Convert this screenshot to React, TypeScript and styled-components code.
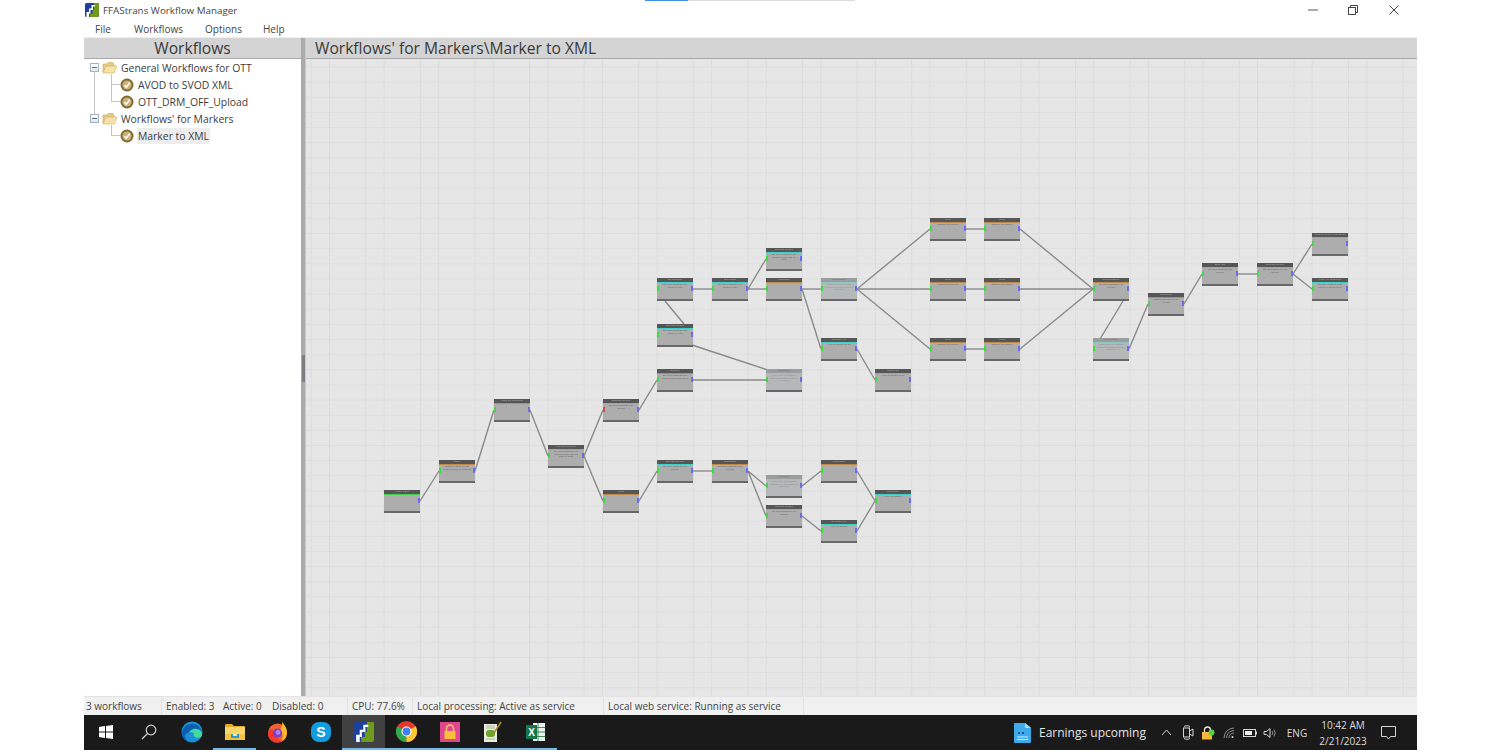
import React from 'react'
import styled, {createGlobalStyle} from 'styled-components'

const GlobalStyle = createGlobalStyle`
  html, body {
    margin: 0;
    padding: 0;
    background: #fff;
    overflow: hidden;
  }
  * {
    box-sizing: border-box;
  }
`

const FONT = `"Open Sans", "Noto Sans", sans-serif`

// the canvas starts here on the page, node coords below are page coords
const ORIGIN_X = 306
const ORIGIN_Y = 59
const NODE_W = 36
const NODE_H = 23

const accents = {
  teal: '#3fd0c8',
  orange: '#c08a4a',
  green: '#44d24e',
  pale: '#8fc4c2',
}

type Kind = keyof typeof accents

interface FlowNode {
  id: string
  x: number
  y: number
  kind: Kind
  title: string
  text: string
  noIn?: boolean
  redIn?: boolean
}

const nodes: FlowNode[] = [
  {id: 'a', x: 384, y: 490, kind: 'green', title: 'Accept video', text: '', noIn: true},
  {id: 'b', x: 439, y: 460, kind: 'orange', title: 'Probe', text: 'Reads the media file and stores values in the variables'},
  {id: 'c', x: 494, y: 399, kind: 'orange', title: 'Check file properties', text: ''},
  {id: 'd', x: 548, y: 445, kind: 'teal', title: 'Populate variables', text: 'The value assigned to the variable is read from the input file name'},
  {id: 'e', x: 603, y: 399, kind: 'teal', title: 'Populate variable', text: 'The value assigned to the variable', redIn: true},
  {id: 'f', x: 603, y: 490, kind: 'orange', title: 'Check', text: ''},
  {id: 'g', x: 657, y: 369, kind: 'orange', title: 'Decision', text: 'The value assigned to the variable is read from the file'},
  {id: 'h', x: 657, y: 460, kind: 'teal', title: 'Populate variable', text: 'The value assigned to the variable'},
  {id: 'i', x: 657, y: 324, kind: 'teal', title: 'Populate variable', text: 'The value assigned to the variable is read'},
  {id: 'j', x: 657, y: 278, kind: 'teal', title: 'Set timecode', text: 'The value assigned to the variable is read'},
  {id: 'k', x: 712, y: 278, kind: 'teal', title: 'Read offset', text: 'The value assigned to the variable is read'},
  {id: 'l', x: 712, y: 460, kind: 'orange', title: 'Read offset', text: 'The value assigned to the variable'},
  {id: 'm', x: 766, y: 248, kind: 'teal', title: 'Populate variable', text: 'The value assigned to the variable is read from file name'},
  {id: 'n', x: 766, y: 278, kind: 'orange', title: 'Conditional', text: ''},
  {id: 'o', x: 766, y: 369, kind: 'pale', title: 'Synchronize', text: 'Waits for all the incoming branches to finish before the next step'},
  {id: 'p', x: 766, y: 475, kind: 'pale', title: 'Synchronize', text: 'Waits for all the incoming branches to finish before the next step'},
  {id: 'q', x: 766, y: 505, kind: 'teal', title: 'Populate variable', text: 'The value assigned to the variable'},
  {id: 'r', x: 821, y: 278, kind: 'pale', title: 'Synchronize', text: 'Waits for all the incoming branches to finish before the next step'},
  {id: 's', x: 821, y: 338, kind: 'teal', title: 'Generate XML', text: 'Write the variable to file'},
  {id: 't', x: 821, y: 460, kind: 'orange', title: 'Conditional', text: ''},
  {id: 'u', x: 821, y: 520, kind: 'teal', title: 'Generate XML', text: 'Write the variable'},
  {id: 'v', x: 875, y: 369, kind: 'teal', title: 'Output file', text: 'Write the variable to file'},
  {id: 'w', x: 875, y: 490, kind: 'teal', title: 'Output file', text: 'Write the variable'},
  {id: 'x1', x: 930, y: 218, kind: 'orange', title: 'Check', text: 'Compare the variable'},
  {id: 'x2', x: 930, y: 278, kind: 'orange', title: 'Check', text: 'Compare the variable'},
  {id: 'x3', x: 930, y: 338, kind: 'orange', title: 'Check', text: 'Compare the variable'},
  {id: 'y1', x: 984, y: 218, kind: 'orange', title: 'Check', text: 'Compare the variable'},
  {id: 'y2', x: 984, y: 278, kind: 'orange', title: 'Check', text: 'Compare the variable'},
  {id: 'y3', x: 984, y: 338, kind: 'orange', title: 'Check', text: 'Compare the variable'},
  {id: 'z', x: 1093, y: 278, kind: 'orange', title: 'Open segments', text: 'The value assigned to the variable'},
  {id: 'z2', x: 1093, y: 338, kind: 'pale', title: 'Synchronize', text: 'Waits for all the incoming branches to finish before the next step'},
  {id: 'aa', x: 1148, y: 293, kind: 'orange', title: 'Conditional', text: 'Compare the value of the variable'},
  {id: 'ab', x: 1202, y: 263, kind: 'teal', title: 'Read XML', text: 'The value assigned to the variable'},
  {id: 'ac', x: 1257, y: 263, kind: 'teal', title: 'Populate variable', text: 'The value assigned to the variable'},
  {id: 'ad', x: 1312, y: 233, kind: 'teal', title: 'Generate output information', text: ''},
  {id: 'ae', x: 1312, y: 278, kind: 'teal', title: 'Write XML output file', text: 'The value assigned to the variable is written to file'},
]

const edges: [string, string][] = [
  ['a', 'b'], ['b', 'c'], ['c', 'd'], ['d', 'e'], ['d', 'f'], ['e', 'g'], ['f', 'h'], ['h', 'l'],
  ['l', 'p'], ['l', 'q'], ['p', 't'], ['q', 'u'], ['t', 'w'], ['u', 'w'], ['g', 'o'],
  ['j', 'k'], ['k', 'm'], ['k', 'n'], ['n', 'r'], ['n', 's'], ['s', 'v'],
  ['r', 'x1'], ['r', 'x2'], ['r', 'x3'], ['x1', 'y1'], ['x2', 'y2'], ['x3', 'y3'],
  ['y1', 'z'], ['y2', 'z'], ['y3', 'z'], ['z2', 'aa'], ['aa', 'ab'], ['ab', 'ac'], ['ac', 'ad'], ['ac', 'ae'],
]

// these run from a node's edge, not from its ports
const looseLines: [number, number, number, number][] = [
  [665, 301, 684, 324],
  [692, 345, 768, 370],
  [1100, 339, 1123, 301],
]

const Page = styled.div`
  width: 1333px;
  height: 750px;
  margin-left: 84px;
  display: flex;
  flex-direction: column;
  font-family: ${FONT};
  color: #333;
  position: relative;
`

const LoadStrip = styled.div`
  position: absolute;
  top: 0;
  left: 561px;
  width: 210px;
  height: 1px;
  background: linear-gradient(90deg, #3f8fe0 0 43px, #dcdcdc 43px);
`

const TitleBar = styled.div`
  height: 20px;
  display: flex;
  align-items: center;
  padding: 0 3px 0 1px;
  font-size: 9.8px;
  color: #444;
`

const TitleText = styled.span`
  flex: 1;
  margin-left: 4px;
`

const WindowButton = styled.div`
  width: 40.5px;
  height: 20px;
  display: flex;
  align-items: center;
  justify-content: center;
`

const MenuBar = styled.div`
  height: 17px;
  display: flex;
  align-items: center;
  padding-left: 11px;
  font-size: 10px;
  color: #444;
`

const MenuItem = styled.span<{$w: number}>`
  width: ${p => p.$w}px;
`

const Main = styled.div`
  flex: 1;
  min-height: 0;
  display: flex;
  border-top: 1px solid #eee;
`

const LeftPanel = styled.div`
  width: 217px;
  display: flex;
  flex-direction: column;
`

const PanelHeader = styled.div<{$align?: string}>`
  height: 21px;
  flex: none;
  background: #d4d4d4;
  border-bottom: 1px solid #a9a9a9;
  font-size: 15.6px;
  line-height: 20px;
  color: #3a3a3a;
  text-align: ${p => p.$align || 'center'};
  padding-left: ${p => (p.$align ? '9px' : '0')};
  white-space: nowrap;
`

const Tree = styled.div`
  flex: 1;
`

const TreeRow = styled.div<{$level: number}>`
  height: 17px;
  position: relative;
  display: flex;
  align-items: center;
  padding-left: ${p => (p.$level === 0 ? 18 : 36)}px;
  font-size: 10.4px;
  color: #3c3c3c;
`

const TreeLabel = styled.span<{$selected?: boolean; $leaf?: boolean}>`
  margin-left: ${p => (p.$leaf ? 3 : 3)}px;
  padding: 0 1px;
  height: 16px;
  line-height: 16px;
  background: ${p => (p.$selected ? '#ededed' : 'transparent')};
  white-space: nowrap;
`

const Expander = styled.span`
  position: absolute;
  left: 6px;
  top: 4px;
  width: 9px;
  height: 9px;
  border: 1px solid #a6b2bd;
  background: linear-gradient(#fff, #dfe5ea);

  &::after {
    content: '';
    position: absolute;
    left: 1px;
    top: 3px;
    width: 5px;
    height: 1px;
    background: #5a6b7b;
  }
`

const GuideV = styled.span<{$left: number; $top: number; $h: number}>`
  position: absolute;
  left: ${p => p.$left}px;
  top: ${p => p.$top}px;
  height: ${p => p.$h}px;
  border-left: 1px solid #c4c4c4;
`

const GuideH = styled.span`
  position: absolute;
  left: 27px;
  top: 8px;
  width: 9px;
  border-top: 1px solid #c4c4c4;
`

const Splitter = styled.div`
  width: 5px;
  flex: none;
  background: #ababab;
  border-right: 1px solid #c9c9c9;
  position: relative;
`

const Grip = styled.span`
  position: absolute;
  left: 1px;
  top: 317px;
  width: 3px;
  height: 27px;
  background: #7b7f84;
`

const RightPanel = styled.div`
  flex: 1;
  min-width: 0;
  display: flex;
  flex-direction: column;
`

const Canvas = styled.div`
  flex: 1;
  position: relative;
  overflow: hidden;
  background-color: #e6e6e6;
  background-image:
    linear-gradient(90deg, #dcdcdc 1px, transparent 1px),
    linear-gradient(90deg, #dcdcdc 1px, transparent 1px),
    linear-gradient(#dedede 1px, transparent 1px);
  background-size: 54.6px 100%, 54.6px 100%, 100% 15.15px;
  background-position: 4.7px 0, 23px 0, 0 7.5px;
`

const Wires = styled.svg`
  position: absolute;
  left: 0;
  top: 0;
  width: 100%;
  height: 100%;
  filter: blur(0.3px);
`

const NodeBox = styled.div<{$x: number; $y: number; $kind: Kind}>`
  position: absolute;
  left: ${p => p.$x - ORIGIN_X}px;
  top: ${p => p.$y - ORIGIN_Y}px;
  width: ${NODE_W}px;
  height: ${NODE_H}px;
  display: flex;
  flex-direction: column;
  background: ${p => (p.$kind === 'pale' ? '#b4b8b8' : '#adadad')};
  filter: blur(0.35px);
`

const NodeHead = styled.div<{$kind: Kind}>`
  height: 4px;
  flex: none;
  background: ${p => (p.$kind === 'pale' ? '#9a9d9d' : '#565656')};
  color: ${p => (p.$kind === 'pale' ? '#666' : '#b4b4b4')};
  font-size: 2.3px;
  line-height: 4px;
  text-align: center;
  white-space: nowrap;
  overflow: hidden;
`

const NodeAccent = styled.div<{$kind: Kind}>`
  height: 1px;
  flex: none;
  background: ${p => accents[p.$kind]};
`

const NodeBody = styled.div<{$kind: Kind}>`
  flex: 1;
  padding: 1px 4px 0;
  font-size: 2.1px;
  line-height: 2.6px;
  text-align: center;
  color: ${p => (p.$kind === 'pale' ? '#8c8c8c' : '#5c5c5c')};
  overflow: hidden;
`

const NodeFoot = styled.div`
  height: 2px;
  flex: none;
  background: #686868;
`

const Port = styled.span<{$side: 'in' | 'out'; $red?: boolean}>`
  position: absolute;
  top: 8px;
  ${p => (p.$side === 'in' ? 'left: 0;' : 'right: 0;')}
  width: 2px;
  height: 5px;
  background: ${p => (p.$side === 'out' ? '#6a6cf0' : p.$red ? '#e04848' : '#3fdc3f')};
`

const StatusBar = styled.div`
  height: 19px;
  flex: none;
  background: #f0f0f0;
  display: flex;
  align-items: center;
  font-size: 10px;
  color: #444;
  border-top: 1px solid #e4e4e4;
`

const StatusCell = styled.div<{$w: number; $edge?: boolean}>`
  width: ${p => p.$w}px;
  flex: none;
  height: 100%;
  display: flex;
  align-items: center;
  padding-left: ${p => (p.$edge ? 2 : 4)}px;
  border-right: 1px solid #e2e2e2;
  white-space: nowrap;
`

const StatusPart = styled.span<{$w: number}>`
  width: ${p => p.$w}px;
`

const Taskbar = styled.div`
  height: 35px;
  flex: none;
  background: #1a1a1a;
  display: flex;
  align-items: stretch;
  padding-right: 14px;
`

const TaskButton = styled.div<{$active?: boolean; $running?: boolean}>`
  width: 43px;
  flex: none;
  display: flex;
  align-items: center;
  justify-content: center;
  background: ${p => (p.$active ? '#414141' : 'transparent')};
  border-bottom: 2px solid ${p => (p.$running ? '#76b9ed' : 'transparent')};
  background-clip: padding-box;
`

const News = styled.div`
  margin-left: auto;
  display: flex;
  align-items: center;
  gap: 8px;
  font-size: 12px;
  color: #e4e4e4;
  white-space: nowrap;
`

const Tray = styled.div`
  display: flex;
  align-items: center;
  margin-left: 10px;
`

const TrayIcon = styled.div<{$w: number}>`
  width: ${p => p.$w}px;
  display: flex;
  align-items: center;
  justify-content: center;
`

const Lang = styled.div`
  width: 30px;
  margin-left: 2px;
  font-size: 10px;
  color: #dcdcdc;
  text-align: center;
`

const Clock = styled.div`
  width: 62px;
  font-size: 10px;
  line-height: 16px;
  color: #dcdcdc;
  text-align: center;
`

const AppLogo = ({size}: {size: number}) => (
  <svg width={size} height={size} viewBox="0 0 28 28">
    <rect width="28" height="28" rx="3" fill="#1d3f9e" />
    <path d="M18 0h10v24a4 4 0 0 1-4 4H10v-7h5v-7h3z" fill="#6f9a1e" />
    <path d="M3 28V18h5v-7h5V4h7v3h-4v7h-5v7H8v7z" fill="#fff" />
  </svg>
)

const FolderIcon = () => (
  <svg width="15" height="13" viewBox="0 0 15 13">
    <path d="M1 11V3h4l1-1.500h5L12 3v2H5z" fill="#e9cd86" stroke="#c6a55a" strokeWidth=".6" />
    <path d="M1 12l3-7h11l-3 7z" fill="#f6e3a8" stroke="#cfae62" strokeWidth=".6" />
  </svg>
)

const CheckIcon = () => (
  <svg width="14" height="14" viewBox="0 0 14 14">
    <circle cx="7" cy="7" r="6.500" fill="#85682f" />
    <circle cx="7" cy="7" r="4.600" fill="#c9b27c" />
    <path d="M4.500 7.200l1.800 2 3.400-4.400" fill="none" stroke="#fff" strokeWidth="1.600" />
  </svg>
)

const WinLogo = () => (
  <svg width="14" height="14" viewBox="0 0 14 14">
    <path d="M0 2l6-.9V6.500H0zM7 1l7-1v6.500H7zM0 7.500h6v5.400L0 12zM7 7.500h7V14l-7-1z" fill="#fff" />
  </svg>
)

const SearchIcon = () => (
  <svg width="16" height="16" viewBox="0 0 16 16" fill="none" stroke="#d0d0d0" strokeWidth="1.200">
    <circle cx="10" cy="6" r="4.800" />
    <path d="M6.500 9.500L1 15" />
  </svg>
)

const EdgeIcon = () => (
  <svg width="22" height="22" viewBox="0 0 22 22">
    <circle cx="11" cy="11" r="10.500" fill="#1b8fd8" />
    <path d="M1 12C2 5 8 2 13 3c5 1 8 5 8 9 0 3-3 4-6 3.500-2-.4-3-2-2-3.500-2-1-6-1-7 2-.8 2.500 1 6 4 7C5 21 1 17 1 12z" fill="#0c5fb0" />
    <path d="M8 12c1-4 8-6 12-2 1 1.500 1.500 3 .8 5-1 2-5 2.500-7 1-1.500-1-1.500-2.500-.8-4-1.500-.8-3.500-.8-5 0z" fill="#40d9a0" />
    <path d="M4 15c0 3 3 6 7 6 2 0 4-.7 5-2-3 1-6 0-7-3-.5-2 .2-4 2-5-3 0-7 1-7 4z" fill="#1b8fd8" />
  </svg>
)

const ExplorerIcon = () => (
  <svg width="20" height="18" viewBox="0 0 20 18">
    <path d="M0 2a1 1 0 0 1 1-1h6l2 2h10a1 1 0 0 1 1 1v1H0z" fill="#e2a92e" />
    <rect y="4" width="20" height="13" rx="1" fill="#f8d568" />
    <rect y="11" width="20" height="6" fill="#f3c23f" />
    <rect x="6" y="11" width="8" height="4" fill="#2a9ad6" />
    <rect x="8" y="11" width="4" height="2" fill="#f8e69a" />
  </svg>
)

const FirefoxIcon = () => (
  <svg width="21" height="22" viewBox="0 0 21 22">
    <circle cx="10.500" cy="12" r="9.500" fill="#f2612a" />
    <path d="M15 0c1 3 5 6 5 11 0 5-3 10-9 10 6-1 6-9 2-11 1-3 3-6 2-10z" fill="#fdb92e" />
    <path d="M1 12c1-2 3-4 5-4-1 2 0 3 2 3 0 5 4 9 8 8-2 2-5 3-7 2.500C4 21 1 17 1 12z" fill="#f9382c" />
    <circle cx="10.500" cy="12" r="4.600" fill="#7b3fc0" />
    <circle cx="11" cy="11.500" r="2.400" fill="#b780e8" />
  </svg>
)

const SkypeIcon = () => (
  <svg width="20" height="20" viewBox="0 0 20 20">
    <rect width="20" height="20" rx="8" fill="#119ee0" />
    <text x="10" y="15" textAnchor="middle" fontSize="14" fontWeight="700" fill="#fff" fontFamily="Liberation Sans, sans-serif">S</text>
  </svg>
)

const ChromeIcon = () => (
  <svg width="21" height="21" viewBox="0 0 21 21">
    <circle cx="10.500" cy="10.500" r="10.500" fill="#e5382c" />
    <path d="M10.500 10.500L1.400 5.200A10.500 10.500 0 0 0 10.500 21z" fill="#2da94f" />
    <path d="M10.500 10.500V21A10.500 10.500 0 0 0 19.600 5.200z" fill="#fcc934" />
    <circle cx="10.500" cy="10.500" r="5" fill="#fff" />
    <circle cx="10.500" cy="10.500" r="3.900" fill="#3f82ef" />
  </svg>
)

const LockAppIcon = () => (
  <svg width="20" height="20" viewBox="0 0 20 20">
    <rect width="20" height="20" fill="#e0468f" />
    <path d="M6.500 9V6.500a3.500 3.500 0 0 1 7 0V9" fill="none" stroke="#f8cd5a" strokeWidth="1.400" />
    <rect x="4.500" y="9" width="11" height="8" fill="#f8bf3a" />
  </svg>
)

const NotepadIcon = () => (
  <svg width="20" height="22" viewBox="0 0 20 22">
    <path d="M1 3h13v18H1z" fill="#e8eedd" />
    <rect x="3" y="9" width="9" height="7" rx="3" fill="#6ea32d" />
    <path d="M3 5h9M3 7h9M3 18h9" stroke="#98a38a" strokeWidth=".7" />
    <path d="M11 12L18 1" stroke="#b08a2a" strokeWidth="1.600" />
  </svg>
)

const ExcelIcon = () => (
  <svg width="20" height="20" viewBox="0 0 20 20">
    <rect x="7" y="1" width="12" height="18" fill="#e9f3ec" />
    <path d="M12 1v18M7 5.500h12M7 10h12M7 14.500h12" stroke="#1e7145" strokeWidth=".8" />
    <rect y="3" width="11" height="14" fill="#17754a" />
    <text x="5.500" y="14" textAnchor="middle" fontSize="10" fontWeight="700" fill="#fff" fontFamily="Liberation Sans, sans-serif">X</text>
  </svg>
)

const EarningsIcon = () => (
  <svg width="17" height="20" viewBox="0 0 17 20">
    <path d="M1 0h10l6 5v14a1 1 0 0 1-1 1H1a1 1 0 0 1-1-1V1a1 1 0 0 1 1-1z" fill="#3fa9ea" />
    <path d="M11 0l6 5h-6z" fill="#a8dbf7" />
    <path d="M3 14h11M3 16.500h11" stroke="#d4eefb" strokeWidth="1" />
    <path d="M4 9h2v2H4zM8 9h2v2H8z" fill="#0f5f9e" />
  </svg>
)

const stroke = {fill: 'none', stroke: '#d4d4d4', strokeWidth: 1}

const trayIcons = [
  {w: 21, icon: <svg width="11" height="7" viewBox="0 0 11 7" {...stroke}><path d="M1 6l4.500-5L10 6" /></svg>},
  {w: 21, icon: (
    <svg width="12" height="15" viewBox="0 0 12 15" {...stroke}>
      <rect x="1.500" y="3" width="6" height="9" />
      <path d="M2 1.500c2-1 4-1 6 0M2 13.500c2 1 4 1 6 0M7.500 6l3.500-2v7L7.500 9" />
    </svg>
  )},
  {w: 20, icon: (
    <svg width="14" height="14" viewBox="0 0 14 14">
      <path d="M3.500 6V4a3 3 0 0 1 6 0v2" fill="none" stroke="#e8e8e8" strokeWidth="1.300" />
      <rect x="1" y="6" width="10" height="7.500" fill="#f5b83a" />
      <circle cx="10.500" cy="6.500" r="3" fill="#5fd042" />
    </svg>
  )},
  {w: 22, icon: (
    <svg width="13" height="12" viewBox="0 0 13 12" fill="none" stroke="#8d8d8d" strokeWidth="1">
      <path d="M1 11A10 10 0 0 1 11 1M3.500 11A7.500 7.500 0 0 1 11 3.500M6 11a5 5 0 0 1 5-5" />
      <circle cx="9.500" cy="10" r="1" fill="#e0e0e0" stroke="none" />
    </svg>
  )},
  {w: 20, icon: (
    <svg width="14" height="8" viewBox="0 0 14 8">
      <rect x=".5" y=".5" width="12" height="7" fill="none" stroke="#d4d4d4" />
      <rect x="2" y="2" width="7" height="4" fill="#eee" />
      <rect x="13" y="2.500" width="1" height="3" fill="#d4d4d4" />
    </svg>
  )},
  {w: 20, icon: (
    <svg width="14" height="12" viewBox="0 0 14 12" {...stroke}>
      <path d="M1 4.500h2.500L7 1.500v9L3.500 7.500H1z" />
      <path d="M9 4a3 3 0 0 1 0 4M11 2.500a6 6 0 0 1 0 7" stroke="#8d8d8d" />
    </svg>
  )},
]

const taskApps = [
  {key: 'edge', icon: <EdgeIcon />},
  {key: 'explorer', icon: <ExplorerIcon />, running: true},
  {key: 'firefox', icon: <FirefoxIcon />},
  {key: 'skype', icon: <SkypeIcon />},
  {key: 'ffastrans', icon: <AppLogo size={20} />, running: true, active: true},
  {key: 'chrome', icon: <ChromeIcon />, running: true},
  {key: 'lock', icon: <LockAppIcon />, running: true},
  {key: 'notepad', icon: <NotepadIcon />, running: true},
  {key: 'excel', icon: <ExcelIcon />, running: true},
]

const App: React.FunctionComponent = () => {
  const byId = (id: string) => nodes.find(node => node.id === id) as FlowNode
  return (
    <Page>
      <GlobalStyle />
      <LoadStrip />
      <TitleBar>
        <AppLogo size={14} />
        <TitleText>FFAStrans Workflow Manager</TitleText>
        <WindowButton>
          <svg width="10" height="2" viewBox="0 0 10 2"><path d="M0 1h10" stroke="#555" /></svg>
        </WindowButton>
        <WindowButton>
          <svg width="10" height="10" viewBox="0 0 10 10" fill="none" stroke="#444">
            <rect x=".5" y="2.500" width="7" height="7" />
            <path d="M2.500 2.500v-2h7v7h-2" />
          </svg>
        </WindowButton>
        <WindowButton>
          <svg width="10" height="10" viewBox="0 0 10 10"><path d="M.5.5l9 9M9.500.5l-9 9" stroke="#444" /></svg>
        </WindowButton>
      </TitleBar>
      <MenuBar>
        <MenuItem $w={39}>File</MenuItem>
        <MenuItem $w={71}>Workflows</MenuItem>
        <MenuItem $w={58}>Options</MenuItem>
        <MenuItem $w={40}>Help</MenuItem>
      </MenuBar>
      <Main>
        <LeftPanel>
          <PanelHeader>Workflows</PanelHeader>
          <Tree>
            <TreeRow $level={0}>
              <GuideV $left={10} $top={12} $h={43} />
              <Expander />
              <FolderIcon />
              <TreeLabel>General Workflows for OTT</TreeLabel>
            </TreeRow>
            <TreeRow $level={1}>
              <GuideV $left={27} $top={-2} $h={27} />
              <GuideH />
              <CheckIcon />
              <TreeLabel $leaf>AVOD to SVOD XML</TreeLabel>
            </TreeRow>
            <TreeRow $level={1}>
              <GuideH />
              <CheckIcon />
              <TreeLabel $leaf>OTT_DRM_OFF_Upload</TreeLabel>
            </TreeRow>
            <TreeRow $level={0}>
              <Expander />
              <FolderIcon />
              <TreeLabel>Workflows' for Markers</TreeLabel>
            </TreeRow>
            <TreeRow $level={1}>
              <GuideV $left={27} $top={-2} $h={10} />
              <GuideH />
              <CheckIcon />
              <TreeLabel $leaf $selected>Marker to XML</TreeLabel>
            </TreeRow>
          </Tree>
        </LeftPanel>
        <Splitter><Grip /></Splitter>
        <RightPanel>
          <PanelHeader $align="left">Workflows' for Markers\Marker to XML</PanelHeader>
          <Canvas>
            <Wires viewBox={`${ORIGIN_X} ${ORIGIN_Y} 1111 637`} preserveAspectRatio="xMinYMin">
              <g stroke="#8a8a8a" strokeWidth="1.400" fill="none">
                {edges.map(([from, to]) => {
                  const a = byId(from)
                  const b = byId(to)
                  return (
                    <line
                      key={from + to}
                      x1={a.x + NODE_W}
                      y1={a.y + 11}
                      x2={b.x}
                      y2={b.y + 11}
                    />
                  )
                })}
                {looseLines.map(([x1, y1, x2, y2]) => (
                  <line key={`${x1}-${y1}`} x1={x1} y1={y1} x2={x2} y2={y2} />
                ))}
              </g>
            </Wires>
            {nodes.map(node => (
              <NodeBox key={node.id} $x={node.x} $y={node.y} $kind={node.kind}>
                <NodeHead $kind={node.kind}>{node.title}</NodeHead>
                <NodeAccent $kind={node.kind} />
                <NodeBody $kind={node.kind}>{node.text}</NodeBody>
                <NodeFoot />
                {!node.noIn && <Port $side="in" $red={node.redIn} />}
                <Port $side="out" />
              </NodeBox>
            ))}
          </Canvas>
        </RightPanel>
      </Main>
      <StatusBar>
        <StatusCell $w={78} $edge>3 workflows</StatusCell>
        <StatusCell $w={186}>
          <StatusPart $w={57}>Enabled: 3</StatusPart>
          <StatusPart $w={49}>Active: 0</StatusPart>
          <StatusPart $w={70}>Disabled: 0</StatusPart>
        </StatusCell>
        <StatusCell $w={65}>CPU: 77.6%</StatusCell>
        <StatusCell $w={191}>Local processing: Active as service</StatusCell>
        <StatusCell $w={200}>Local web service: Running as service</StatusCell>
      </StatusBar>
      <Taskbar>
        <TaskButton><WinLogo /></TaskButton>
        <TaskButton><SearchIcon /></TaskButton>
        {taskApps.map(app => (
          <TaskButton key={app.key} $active={app.active} $running={app.running}>{app.icon}</TaskButton>
        ))}
        <News>
          <EarningsIcon />
          Earnings upcoming
        </News>
        <Tray>
          {trayIcons.map((item, i) => (
            <TrayIcon key={i} $w={item.w}>{item.icon}</TrayIcon>
          ))}
          <Lang>ENG</Lang>
          <Clock>10:42 AM<br />2/21/2023</Clock>
          <TrayIcon $w={29}>
            <svg width="15" height="14" viewBox="0 0 15 14" {...stroke}>
              <path d="M.5.500h14v10H9.500L7.500 13l-2-2.500h-5z" />
            </svg>
          </TrayIcon>
        </Tray>
      </Taskbar>
    </Page>
  )
}

export default App
